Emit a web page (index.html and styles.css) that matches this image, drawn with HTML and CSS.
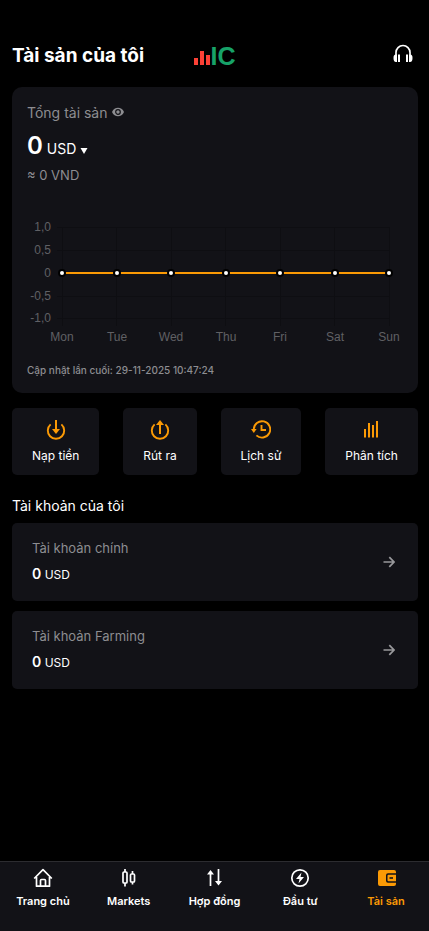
FILE: index.html
```html
<!DOCTYPE html>
<html lang="vi">
<head>
<meta charset="utf-8">
<meta name="viewport" content="width=device-width, initial-scale=1">
<title>Tài sản của tôi</title>
<link rel="stylesheet" href="styles.css">
</head>
<body>
<div class="app">
  <header class="header">
    <h1 class="title">Tài sản của tôi</h1>
    <div class="logo" role="img" aria-label="IC">
      <svg class="logo-bars" width="17" height="20" viewBox="0 0 17 20" fill="#fb4136"><path d="M0 12h4v7H0zM6 5h4v14H6zM12 9h4v10h-4z"/></svg>
      <span class="logo-text">IC</span>
    </div>
    <a class="support" href="#support" aria-label="Hỗ trợ">
      <svg width="20" height="20" viewBox="0 0 20 20"><path d="M3 12V8.500a7 7 0 0 1 14 0V12" fill="none" stroke="#fff" stroke-width="1.700"/><path d="M4 10.500H3C1 10.500.500 12 .500 14s.5 4 2.500 4h1zM16 10.500h1c2 0 2.500 1.500 2.500 3.500s-.5 4-2.500 4h-1zM5 10.500h2V18H5zM13 10.500h2V18h-2z" fill="#fff"/></svg>
    </a>
  </header>

  <main class="main">
    <section class="summary">
      <div class="summary-label">
        <span>Tổng tài sản</span>
        <button class="eye" type="button" aria-label="Ẩn số dư">
          <svg width="12" height="10" viewBox="0 0 12 10"><path d="M0 5C1.300 2 3.500.700 6 .700S10.700 2 12 5C10.700 8 8.500 9.300 6 9.300S1.300 8 0 5z" fill="#8d8d91"/><circle cx="6" cy="5" r="2.300" fill="none" stroke="#121217" stroke-width="1.200"/></svg>
        </button>
      </div>
      <button class="balance" type="button">
        <span class="balance-value">0</span>
        <span class="balance-unit">USD</span>
        <svg width="8" height="6" viewBox="0 0 8 6"><path d="M.5 0h7L4 6z" fill="#fff"/></svg>
      </button>
      <p class="converted">≈ 0 VND</p>

      <svg class="chart" viewBox="0 0 376 130" role="img" aria-label="Tổng tài sản theo ngày">
        <path class="grid" d="M30 10.500h332M30 33.500h332M30 79.500h332M30 101.500h332M35.500 10v99M89.500 10v99M144.500 10v99M198.500 10v99M253.500 10v99M307.500 10v99M362.500 10v99"/>
        <g class="axis axis-y">
          <text x="24" y="14">1,0</text><text x="24" y="37">0,5</text><text x="24" y="60">0</text><text x="24" y="83">-0,5</text><text x="24" y="105">-1,0</text>
        </g>
        <path class="series" d="M35 56h327"/>
        <g class="points">
          <circle cx="35" cy="56" r="3"/><circle cx="90" cy="56" r="3"/><circle cx="144" cy="56" r="3"/><circle cx="199" cy="56" r="3"/><circle cx="253" cy="56" r="3"/><circle cx="308" cy="56" r="3"/><circle cx="362" cy="56" r="3"/>
        </g>
        <g class="axis axis-x">
          <text x="35" y="124">Mon</text><text x="90" y="124">Tue</text><text x="144" y="124">Wed</text><text x="199" y="124">Thu</text><text x="253" y="124">Fri</text><text x="308" y="124">Sat</text><text x="362" y="124">Sun</text>
        </g>
      </svg>
      <p class="updated">Cập nhật lần cuối: 29-11-2025 10:47:24</p>
    </section>

    <div class="actions">
      <button class="action" type="button">
        <svg width="20" height="22" viewBox="0 0 20 22"><path d="M4.600 5.400a8.200 8.200 0 1 0 10.800 0" fill="none" stroke="#fb9a05" stroke-width="1.900"/><path d="M10 1v9" stroke="#fb9a05" stroke-width="2"/><path d="M6 10h8l-4 5z" fill="#fb9a05"/></svg>
        <span>Nạp tiền</span>
      </button>
      <button class="action" type="button">
        <svg width="20" height="22" viewBox="0 0 20 22"><path d="M4.600 5.400a8.200 8.200 0 1 0 10.800 0" fill="none" stroke="#fb9a05" stroke-width="1.900"/><path d="M10 15V5" stroke="#fb9a05" stroke-width="2"/><path d="M6 6h8l-4-5z" fill="#fb9a05"/></svg>
        <span>Rút ra</span>
      </button>
      <button class="action" type="button">
        <svg width="20" height="22" viewBox="0 0 20 22"><path d="M2.800 10.500a8.200 8.200 0 1 1 2.600 5.900" fill="none" stroke="#fb9a05" stroke-width="1.900"/><path d="M0 10h5.600L2.800 14z" fill="#fb9a05"/><path d="M10.500 6v5H15" fill="none" stroke="#fb9a05" stroke-width="1.900"/></svg>
        <span>Lịch sử</span>
      </button>
      <button class="action" type="button">
        <svg width="20" height="22" viewBox="0 0 20 22"><path d="M3 10v8.500M7 4v14.500M11 6v12.500M15 2v16.500" stroke="#fb9a05" stroke-width="2"/></svg>
        <span>Phân tích</span>
      </button>
    </div>

    <h2 class="section-title">Tài khoản của tôi</h2>
    <div class="accounts">
      <a class="account" href="#main">
        <span class="account-info">
          <span class="account-name">Tài khoản chính</span>
          <span class="account-balance"><b>0</b> USD</span>
        </span>
        <svg width="12" height="12" viewBox="0 0 12 12" fill="none" stroke="#98989b" stroke-width="1.700"><path d="M.5 6H11M6.300 1.200 11 6l-4.700 4.800"/></svg>
      </a>
      <a class="account" href="#farming">
        <span class="account-info">
          <span class="account-name">Tài khoản Farming</span>
          <span class="account-balance"><b>0</b> USD</span>
        </span>
        <svg width="12" height="12" viewBox="0 0 12 12" fill="none" stroke="#98989b" stroke-width="1.700"><path d="M.5 6H11M6.300 1.200 11 6l-4.700 4.800"/></svg>
      </a>
    </div>
  </main>

  <nav class="tabs">
    <a class="tab" href="#home">
      <svg width="20" height="20" viewBox="0 0 20 20" fill="none" stroke="#fff" stroke-width="1.700"><path d="M1.200 10.500 10 1.700l8.800 8.800M3.500 9v9.200h13V9M7.500 18v-5.500q0-1 1-1h3q1 0 1 1V18" stroke-linejoin="round"/></svg>
      <span>Trang chủ</span>
    </a>
    <a class="tab" href="#markets">
      <svg width="20" height="20" viewBox="0 0 20 20" fill="none" stroke="#fff" stroke-width="1.700"><rect x="4" y="4" width="4" height="11" rx="1"/><rect x="11.500" y="6" width="4" height="8" rx="1"/><path d="M6 1v3M6 15v3.500M13.500 3v3M13.500 14v2.500"/></svg>
      <span>Markets</span>
    </a>
    <a class="tab" href="#futures">
      <svg width="20" height="20" viewBox="0 0 20 20" fill="none" stroke="#fff" stroke-width="1.700"><path d="M6.500 18V4M14.500 1v14"/><path d="M3 6.500 6.500 2 10 6.500zM11 13l3.500 4.500L18 13z" fill="#fff" stroke="none"/></svg>
      <span>Hợp đồng</span>
    </a>
    <a class="tab" href="#invest">
      <svg width="20" height="20" viewBox="0 0 20 20"><circle cx="10" cy="10" r="8.200" fill="none" stroke="#fff" stroke-width="1.700"/><path d="M11.500 4.500 6 11h3.500l-1 4.500L14 9h-3.500z" fill="#fff"/></svg>
      <span>Đầu tư</span>
    </a>
    <a class="tab tab-active" href="#assets" aria-current="page">
      <svg width="20" height="20" viewBox="0 0 20 20"><path d="M4 2h14q2 0 2 2v1.200h-8q-2 0-2 2v5.600q0 2 2 2h8V16q0 2-2 2H4q-2 0-2-2V4q0-2 2-2z" fill="#fb9a05"/><path d="M12.500 6.800H20v6.400h-7.500q-1 0-1-1V7.800q0-1 1-1z" fill="#fb9a05"/><path d="M13.500 10H17" stroke="#121217" stroke-width="1.600"/></svg>
      <span>Tài sản</span>
    </a>
  </nav>
</div>
</body>
</html>
```
FILE: styles.css
```css
* {
  box-sizing: border-box;
}

body {
  margin: 0;
  background: #000;
  color: #fff;
  font-family: Inter, "Noto Sans", sans-serif;
}

h1, h2, p {
  margin: 0;
}

a {
  color: inherit;
  text-decoration: none;
}

button {
  border: 0;
  padding: 0;
  background: none;
  color: inherit;
  font: inherit;
  cursor: pointer;
}

svg {
  display: block;
  flex: none;
}

.app {
  display: flex;
  flex-direction: column;
  min-height: 100vh;
}

.header {
  display: grid;
  grid-template-columns: 1fr auto 1fr;
  align-items: center;
  padding: 40px 12px 15px;
}

.title {
  font-size: 19px;
  line-height: 32px;
  font-weight: 700;
  white-space: nowrap;
}

.logo {
  display: flex;
  align-items: center;
}

.logo-text {
  color: #17a268;
  font: bold 25px/28px "Liberation Sans", sans-serif;
}

.support {
  justify-self: end;
  margin: 0 4px 4px 0;
}

.main {
  flex: 1;
  padding: 0 11px 0 12px;
}

.summary {
  padding: 15px;
  border-radius: 10px;
  background: #121217;
}

.summary-label {
  display: flex;
  align-items: center;
  gap: 4px;
  color: #8d8d91;
  font-size: 14px;
  line-height: 22px;
}

.eye {
  margin-bottom: 2px;
}

.balance {
  display: flex;
  align-items: baseline;
  gap: 4px;
  margin-top: 7px;
  line-height: 30px;
}

.balance-value {
  font-size: 24px;
  font-weight: 600;
}

.balance-unit {
  font-size: 14px;
}

.converted {
  margin-top: 1px;
  color: #8d8d91;
  font-size: 13px;
  line-height: 20px;
}

.chart {
  width: 100%;
  margin-top: 32px;
}

.grid {
  fill: none;
  stroke: #0e0e12;
}

.series {
  stroke: #fb9a05;
  stroke-width: 2;
}

.points {
  fill: #fff;
  stroke: #000;
  stroke-width: 2;
}

.axis {
  fill: #606064;
  font: 12px "Liberation Sans", sans-serif;
}

.axis-y {
  text-anchor: end;
}

.axis-x {
  text-anchor: middle;
}

.updated {
  margin-top: 15px;
  color: #8d8d91;
  font-size: 10px;
  line-height: 16px;
  font-weight: 500;
}

.actions {
  display: flex;
  justify-content: space-between;
  margin-top: 15px;
}

.action {
  display: flex;
  flex-direction: column;
  align-items: center;
  gap: 5px;
  padding: 11px 20px 10px;
  border-radius: 5px;
  background: #121217;
  font-size: 12px;
  line-height: 19px;
}

.section-title {
  margin-top: 20px;
  font-size: 14px;
  line-height: 22px;
  font-weight: 400;
}

.accounts {
  display: flex;
  flex-direction: column;
  gap: 10px;
  margin-top: 6px;
}

.account {
  display: flex;
  align-items: center;
  justify-content: space-between;
  padding: 15px 23px 15px 20px;
  border-radius: 5px;
  background: #121217;
}

.account-info {
  display: flex;
  flex-direction: column;
  gap: 6px;
}

.account-name {
  color: #8d8d91;
  font-size: 13px;
  line-height: 20px;
}

.account-balance {
  font-size: 12px;
  line-height: 22px;
}

.account-balance b {
  font-size: 14px;
  font-weight: 600;
  line-height: 1;
}

.tabs {
  display: grid;
  grid-template-columns: repeat(5, 1fr);
  padding: 6px 0 20px;
  border-top: 1px solid #2c2c30;
  background: #121217;
}

.tab {
  display: flex;
  flex-direction: column;
  align-items: center;
  gap: 4px;
  font-size: 11px;
  line-height: 19px;
  font-weight: 600;
}

.tab-active {
  color: #fb9a05;
}
```
